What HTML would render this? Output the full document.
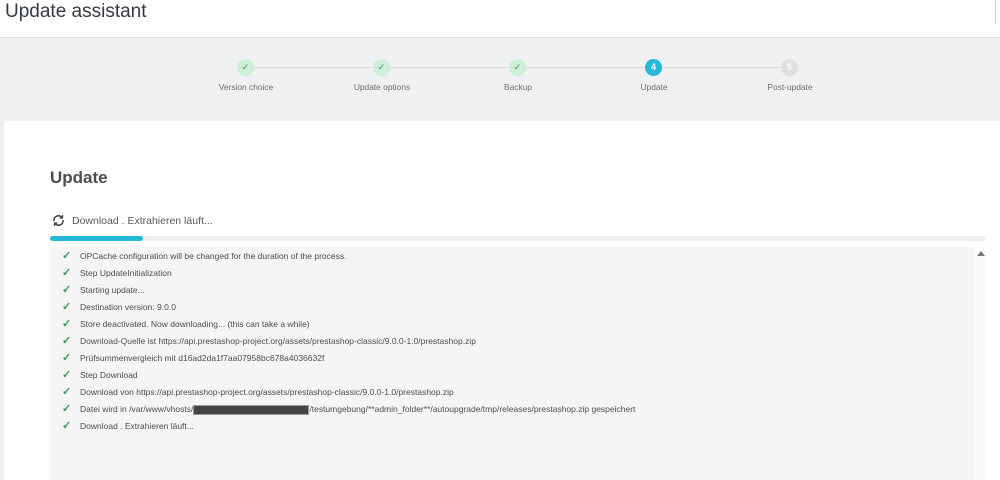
<!DOCTYPE html>
<html><head><style>
*{margin:0;padding:0;box-sizing:border-box}
body{width:1000px;height:480px;overflow:hidden;background:#eef0f2;font-family:"Liberation Sans",sans-serif;position:relative}
.hdr{position:absolute;left:0;top:0;width:1000px;height:38px;background:#fff;border-bottom:1px solid #dfe2e6}
.hdr h1{position:absolute;left:5px;top:1px;font-size:19px;font-weight:normal;color:#363a41}
.vl{position:absolute;left:995px;top:0;width:1px;height:24px;background:#ccc}
.line{position:absolute;top:67px;height:1px;background:#d8dbdf;left:246px;width:543px}
.st{position:absolute;top:59px;width:17px;height:17px;border-radius:50%;background:#cfeed7;color:#3a9a5b;font-size:9px;text-align:center;line-height:17px}
.lbl{position:absolute;top:82px;font-size:8.4px;color:#6c6f74;width:120px;text-align:center}
.panel{position:absolute;left:4px;top:121px;width:996px;height:359px;background:#fff}
h2{position:absolute;left:50px;top:168px;font-size:17px;color:#4a4d52;font-weight:bold}
.cur{position:absolute;left:72px;top:215px;font-size:10.5px;color:#55585c}
.bar{position:absolute;left:50px;top:236px;width:936px;height:5px;background:#f0f0f0;border-radius:3px}
.bar i{display:block;width:93px;height:5px;background:#25b9d7;border-radius:3px}
.log{position:absolute;left:50px;top:247px;width:925px;height:233px;background:#f5f5f5}
.sb{position:absolute;left:975px;top:247px;width:11px;height:233px;background:#fafafa}
.row{position:absolute;left:30px;font-size:8.5px;color:#4a4d52;white-space:nowrap}
.row b{position:absolute;left:-18px;top:-2px;color:#3a9a5b;font-weight:bold;font-size:11px}
</style></head><body>
<div class="hdr"><h1>Update assistant</h1><div class="vl"></div></div>
<div class="line"></div>
<div class="st" style="left:237px">✓</div>
<div class="st" style="left:373px">✓</div>
<div class="st" style="left:509px">✓</div>
<div class="st" style="left:645px;background:#25b9d7;color:#fff;font-weight:bold">4</div>
<div class="st" style="left:781px;background:#e0e0e0;color:#fff;font-weight:bold">5</div>
<div class="lbl" style="left:186px">Version choice</div>
<div class="lbl" style="left:322px">Update options</div>
<div class="lbl" style="left:458px">Backup</div>
<div class="lbl" style="left:594px">Update</div>
<div class="lbl" style="left:730px">Post-update</div>
<div class="panel"></div>
<h2>Update</h2>
<svg style="position:absolute;left:52px;top:214px" width="13" height="13" viewBox="0 0 13 13" fill="none" stroke="#444" stroke-width="1.6"><path d="M2 7A4.5 4.5 0 0 1 10 3.5"/><path d="M11 6A4.5 4.5 0 0 1 3 9.5"/><path d="M10.5 1v3h-3" stroke-width="1.3"/><path d="M2.5 12V9h3" stroke-width="1.3"/></svg>
<div class="cur">Download . Extrahieren läuft...</div>
<div class="bar"><i></i></div>
<div class="log">
<div class="row" style="top:4px"><b>✓</b>OPCache configuration will be changed for the duration of the process.</div>
<div class="row" style="top:21px"><b>✓</b>Step UpdateInitialization</div>
<div class="row" style="top:38px"><b>✓</b>Starting update...</div>
<div class="row" style="top:55px"><b>✓</b>Destination version: 9.0.0</div>
<div class="row" style="top:72px"><b>✓</b>Store deactivated. Now downloading... (this can take a while)</div>
<div class="row" style="top:89px"><b>✓</b>Download-Quelle ist https://api.prestashop-project.org/assets/prestashop-classic/9.0.0-1.0/prestashop.zip</div>
<div class="row" style="top:106px"><b>✓</b>Prüfsummenvergleich mit d16ad2da1f7aa07958bc678a4036632f</div>
<div class="row" style="top:123px"><b>✓</b>Step Download</div>
<div class="row" style="top:140px"><b>✓</b>Download von https://api.prestashop-project.org/assets/prestashop-classic/9.0.0-1.0/prestashop.zip</div>
<div class="row" style="top:157px"><b>✓</b>Datei wird in /var/www/vhosts/<span style="display:inline-block;width:116px;height:10px;background:#444;vertical-align:middle;border:1px solid #999"></span>/testumgebung/**admin_folder**/autoupgrade/tmp/releases/prestashop.zip gespeichert</div>
<div class="row" style="top:174px"><b>✓</b>Download . Extrahieren läuft...</div>
</div>
<div class="sb"><div style="position:absolute;left:2px;top:4px;width:0;height:0;border-left:4px solid transparent;border-right:4px solid transparent;border-bottom:5px solid #777"></div></div>
</body></html>
